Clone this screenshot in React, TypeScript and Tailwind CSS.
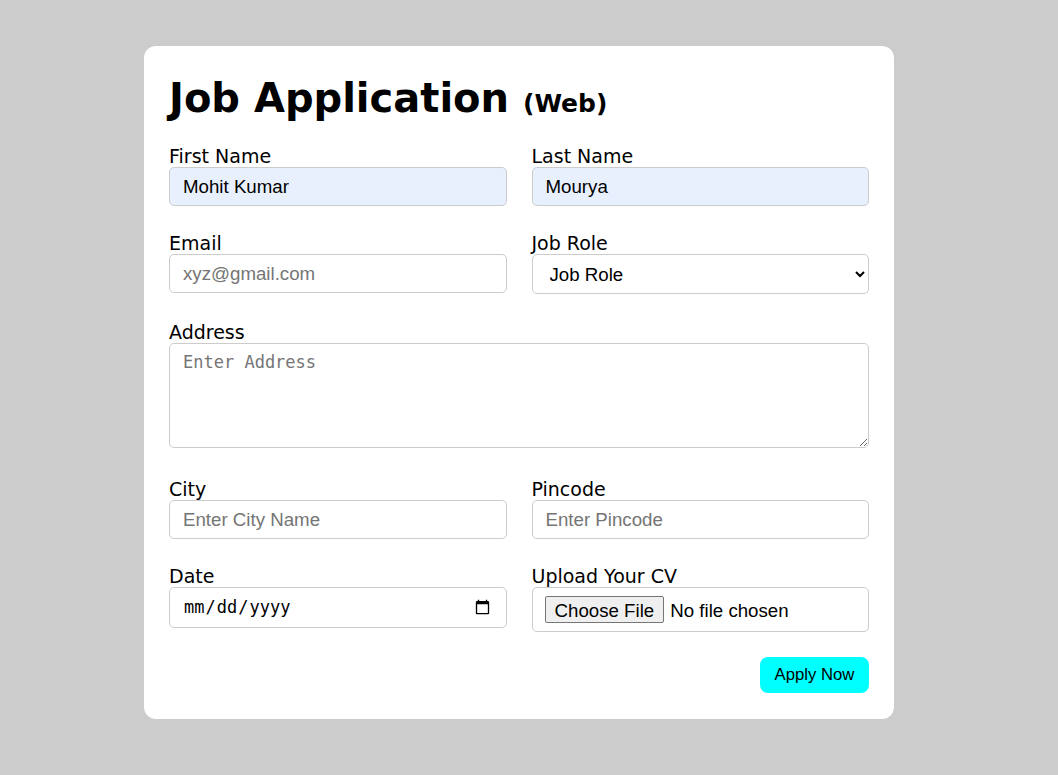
import { useState } from "react";

const labelCls = "block text-[19px] leading-[21px] text-black [font-family:'DejaVu_Sans',sans-serif]";
const inputCls =
  "block w-full h-[39px] px-[13px] border border-[#cccccc] rounded-[5px] text-[18.7px] text-black outline-none placeholder:text-[#757575] [font-family:'Liberation_Sans',Arial,sans-serif]";

const Field = ({ label, children }: { label: string; children: React.ReactNode }) => (
  <div className="flex flex-col">
    <label className={labelCls}>{label}</label>
    {children}
  </div>
);

export default function App() {
  const [first, setFirst] = useState("Mohit Kumar");
  const [last, setLast] = useState("Mourya");

  return (
    <div className="min-h-screen w-full bg-[#cccccc] pt-[46px]">
      <form
        className="ml-[144px] w-[750px] bg-white rounded-[12px] px-[25px] pt-[29px] pb-[26px]"
        onSubmit={(e) => e.preventDefault()}
      >
        <h1 className="text-[40px] leading-[47px] font-bold text-black mb-[19px] [font-family:'DejaVu_Sans',sans-serif]">
          Job Application <span className="text-[25px]">(Web)</span>
        </h1>

        {/* name row */}
        <div className="grid grid-cols-2 gap-x-[25px]">
          <Field label="First Name">
            <input className={`${inputCls} bg-[#e8f0fe]`} value={first} onChange={(e) => setFirst(e.target.value)} />
          </Field>
          <Field label="Last Name">
            <input className={`${inputCls} bg-[#e8f0fe]`} value={last} onChange={(e) => setLast(e.target.value)} />
          </Field>
        </div>

        <div className="grid grid-cols-2 gap-x-[25px] mt-[27px]">
          <Field label="Email">
            <input type="email" className={`${inputCls} bg-white`} placeholder="xyz@gmail.com" />
          </Field>
          <Field label="Job Role">
            <select
              defaultValue=""
              className="block w-full h-[40px] pl-[13px] pr-[8px] border border-[#cccccc] rounded-[5px] text-[18.7px] text-black bg-white outline-none [font-family:'Liberation_Sans',Arial,sans-serif]"
            >
              <option value="">Job Role</option>
              <option value="frontend">Frontend Developer</option>
              <option value="backend">Backend Developer</option>
              <option value="fullstack">Full Stack Developer</option>
            </select>
          </Field>
        </div>

        <div className="mt-[28px]">
          <Field label="Address">
            <textarea
              className="block w-full h-[105px] px-[13px] py-[8px] border border-[#cccccc] rounded-[5px] text-[17px] leading-[20px] text-black bg-white outline-none placeholder:text-[#757575] [font-family:'DejaVu_Sans_Mono',monospace]"
              placeholder="Enter Address"
            />
          </Field>
        </div>

        <div className="grid grid-cols-2 gap-x-[25px] mt-[31px]">
          <Field label="City">
            <input className={`${inputCls} bg-white`} placeholder="Enter City Name" />
          </Field>
          <Field label="Pincode">
            <input className={`${inputCls} bg-white`} placeholder="Enter Pincode" />
          </Field>
        </div>

        <div className="grid grid-cols-2 gap-x-[25px] mt-[27px] items-start">
          <Field label="Date">
            <input
              type="date"
              className="block w-full h-[41px] px-[13px] border border-[#cccccc] rounded-[5px] text-[17px] text-black bg-white outline-none [font-family:'DejaVu_Sans_Mono',monospace]"
            />
          </Field>
          <Field label="Upload Your CV">
            <input
              type="file"
              className="block w-full h-[45px] px-[12px] py-[8px] border border-[#cccccc] rounded-[5px] text-[18.7px] leading-[27px] text-black bg-white [font-family:'Liberation_Sans',Arial,sans-serif] file:h-[27px] file:px-[9px] file:mr-[6px] file:border file:border-solid file:border-[#767676] file:rounded-[2px] file:bg-[#efefef] file:text-black"
            />
          </Field>
        </div>

        <div className="flex justify-end mt-[25px]">
          <button
            type="submit"
            className="h-[36px] w-[109px] rounded-[8px] bg-[#00ffff] text-[16.7px] text-black [font-family:'Liberation_Sans',Arial,sans-serif]"
          >
            Apply Now
          </button>
        </div>
      </form>
    </div>
  );
}
